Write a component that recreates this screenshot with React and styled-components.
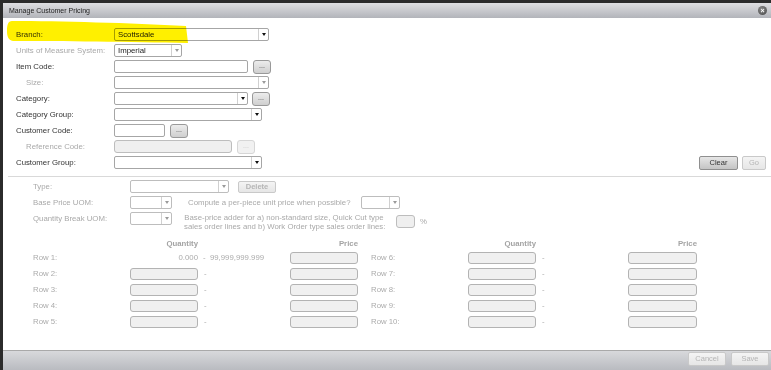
import { Fragment } from "react";
import styled, { createGlobalStyle } from "styled-components";

const GlobalStyle = createGlobalStyle`
  * { box-sizing: border-box; }
  html, body { margin: 0; padding: 0; }
  body {
    background: #2b2b2b;
    font-family: "Liberation Sans", Arial, sans-serif;
    font-size: 7.8px;
    color: #333;
    overflow: hidden;
  }
`;

const Window = styled.div`
  position: relative;
  margin: 3px 0 0 3px;
  width: 768px;
  height: 367px;
  background: #fff;
  display: flex;
  flex-direction: column;
`;

const TitleBar = styled.div`
  height: 15px;
  background: linear-gradient(#dedee1, #b2b4ba);
  display: flex;
  align-items: center;
  justify-content: space-between;
  padding: 0 4px 0 6px;
  font-size: 7px;
  color: #222;
`;

const CloseButton = styled.div`
  width: 9px;
  height: 9px;
  border-radius: 50%;
  background: radial-gradient(circle at 40% 35%, #8a8a8a, #444);
  color: #fff;
  font-size: 7px;
  line-height: 9px;
  text-align: center;
  font-weight: bold;
`;

const Content = styled.div`
  flex: 1;
  padding-top: 10px;
`;

const TopForm = styled.div`
  padding: 0 5px 0 13px;
`;

const Row = styled.div`
  display: flex;
  align-items: flex-start;
  height: 16px;
`;

const Label = styled.div`
  width: ${(p) => p.$w || 98}px;
  padding-left: ${(p) => (p.$indent ? 10 : 0)}px;
  line-height: 13px;
  color: ${(p) => (p.$muted ? "#a9a9a9" : "#333")};
  white-space: nowrap;
  flex-shrink: 0;
`;

const Input = styled.div`
  width: ${(p) => p.$w}px;
  height: ${(p) => p.$h || 13}px;
  margin-left: ${(p) => p.$ml || 0}px;
  margin-top: ${(p) => p.$mt || 0}px;
  border: 1px solid ${(p) => (p.$off ? "#bdbdbd" : "#a6a6a6")};
  border-radius: ${(p) => (p.$off ? 3 : 2)}px;
  background: ${(p) => (p.$off ? "#efefef" : "#fff")};
  flex-shrink: 0;
`;

const Select = styled.div`
  width: ${(p) => p.$w}px;
  height: 13px;
  margin-left: ${(p) => p.$ml || 0}px;
  border: 1px solid ${(p) => (p.$off ? "#bdbdbd" : "#a6a6a6")};
  border-radius: 2px;
  background: #fff;
  display: flex;
  flex-shrink: 0;
`;

const SelectValue = styled.div`
  flex: 1;
  padding-left: 3px;
  line-height: 11px;
  color: #222;
  overflow: hidden;
  white-space: nowrap;
`;

const SelectArrow = styled.div`
  width: 10px;
  border-left: 1px solid #d0d0d0;
  display: flex;
  align-items: center;
  justify-content: center;

  &::after {
    content: "";
    border-left: 2.5px solid transparent;
    border-right: 2.5px solid transparent;
    border-top: 3px solid ${(p) => (p.$light ? "#9a9a9a" : "#111")};
  }
`;

const DotButton = styled.div`
  width: 18px;
  height: 14px;
  margin-left: ${(p) => p.$ml || 5}px;
  border: 1px solid ${(p) => (p.$off ? "#d6d6d6" : "#999")};
  border-radius: 3px;
  background: ${(p) =>
    p.$off ? "#f1f1f1" : "linear-gradient(#ececec, #cfcfcf)"};
  color: ${(p) => (p.$off ? "#c8c8c8" : "#444")};
  font-size: 7px;
  line-height: 10px;
  text-align: center;
  flex-shrink: 0;
`;

const ActionButton = styled.div`
  width: ${(p) => p.$w}px;
  height: ${(p) => p.$h || 14}px;
  margin-left: ${(p) => p.$ml || 0}px;
  margin-top: ${(p) => p.$mt || 0}px;
  border: 1px solid ${(p) => (p.$off ? "#c9c9c9" : "#8f8f8f")};
  border-radius: 2px;
  background: ${(p) =>
    p.$off ? "linear-gradient(#f4f4f4, #e6e6e6)" : "linear-gradient(#e6e6e6, #c4c4c4)"};
  color: ${(p) => (p.$off ? "#b5b5b5" : "#333")};
  font-size: 7.5px;
  font-weight: ${(p) => (p.$bold ? "bold" : "normal")};
  line-height: ${(p) => (p.$h || 14) - 2}px;
  text-align: center;
  flex-shrink: 0;
`;

const RightButtons = styled.div`
  margin-left: auto;
  display: flex;
  gap: 4px;
`;

const Divider = styled.div`
  height: 1px;
  margin: 4px 0 3px 5px;
  background: #d9d9d9;
`;

const LowerForm = styled.div`
  padding-left: 30px;
  color: #a9a9a9;
`;

const Note = styled.div`
  width: ${(p) => p.$w}px;
  margin-left: ${(p) => p.$ml}px;
  margin-top: ${(p) => p.$mt || 0}px;
  line-height: ${(p) => p.$lh || 13}px;
  text-align: ${(p) => p.$align || "left"};
  white-space: nowrap;
  flex-shrink: 0;
`;

const Percent = styled.div`
  margin-left: 5px;
  line-height: 20px;
`;

const BreakRow = styled(Row)`
  height: 24px;
`;

const Grid = styled.div`
  display: grid;
  grid-template-columns: 97px 68px 92px 68px 13px 97px 68px 92px 69px;
  grid-auto-rows: 16px;
  color: #ababab;
`;

const Head = styled.div`
  grid-column: ${(p) => p.$col};
  text-align: right;
  line-height: 16px;
  font-weight: bold;
  color: #a4a4a4;
`;

const RowLabel = styled.div`
  grid-column: ${(p) => p.$col};
  line-height: 12px;
`;

const Cell = styled.div`
  grid-column: ${(p) => p.$col};
  line-height: 12px;
  text-align: ${(p) => p.$align || "left"};
  padding-left: ${(p) => p.$pl || 0}px;
  white-space: nowrap;
`;

const GridInput = styled.div`
  grid-column: ${(p) => p.$col};
  height: 12px;
  border: 1px solid #b3b3b3;
  border-radius: 3px;
  background: #f0f0f0;
`;

const Footer = styled.div`
  height: 20px;
  border-top: 1px solid #a9a9a9;
  background: linear-gradient(#d8d9dc, #b9bbc0);
  display: flex;
  justify-content: flex-end;
  align-items: flex-start;
  padding: 1px 2px 0 0;
  gap: 5px;
`;

const Highlight = styled.svg`
  position: absolute;
  left: -3px;
  top: -3px;
  width: 200px;
  height: 50px;
  mix-blend-mode: multiply;
  pointer-events: none;
`;

const Drop = ({ w, ml, value, off, light }) => (
  <Select $w={w} $ml={ml} $off={off}>
    <SelectValue>{value}</SelectValue>
    <SelectArrow $light={light || off} />
  </Select>
);

const leftRows = [1, 2, 3, 4, 5];

export default function App() {
  return (
    <>
      <GlobalStyle />
      <Window>
        <TitleBar>
          <span>Manage Customer Pricing</span>
          <CloseButton>×</CloseButton>
        </TitleBar>
        <Content>
          <TopForm>
            <Row>
              <Label>Branch:</Label>
              <Drop w={155} value="Scottsdale" />
            </Row>
            <Row>
              <Label $muted>Units of Measure System:</Label>
              <Drop w={68} value="Imperial" light />
            </Row>
            <Row>
              <Label>Item Code:</Label>
              <Input $w={134} />
              <DotButton>...</DotButton>
            </Row>
            <Row>
              <Label $muted $indent>Size:</Label>
              <Drop w={155} light />
            </Row>
            <Row>
              <Label>Category:</Label>
              <Drop w={134} />
              <DotButton $ml={4}>...</DotButton>
            </Row>
            <Row>
              <Label>Category Group:</Label>
              <Drop w={148} />
            </Row>
            <Row>
              <Label>Customer Code:</Label>
              <Input $w={51} />
              <DotButton>...</DotButton>
            </Row>
            <Row>
              <Label $muted $indent>Reference Code:</Label>
              <Input $w={118} $off />
              <DotButton $off>...</DotButton>
            </Row>
            <Row>
              <Label>Customer Group:</Label>
              <Drop w={148} />
              <RightButtons>
                <ActionButton $w={39}>Clear</ActionButton>
                <ActionButton $w={24} $off>Go</ActionButton>
              </RightButtons>
            </Row>
          </TopForm>
          <Divider />
          <LowerForm>
            <Row>
              <Label $w={97} $muted>Type:</Label>
              <Drop w={99} off />
              <ActionButton $w={38} $h={12} $ml={9} $mt={1} $off $bold>
                Delete
              </ActionButton>
            </Row>
            <Row>
              <Label $w={97} $muted>Base Price UOM:</Label>
              <Drop w={42} off />
              <Note $w={173} $ml={16}>
                Compute a per-piece unit price when possible?
              </Note>
              <Drop w={39} off />
            </Row>
            <BreakRow>
              <Label $w={97} $muted>Quantity Break UOM:</Label>
              <Drop w={42} off />
              <Note $w={200} $ml={12} $mt={2} $lh={8.5} $align="center">
                Base-price adder for a) non-standard size, Quick Cut type
                <br />
                sales order lines and b) Work Order type sales order lines:
              </Note>
              <Input $w={19} $ml={12} $mt={3} $off />
              <Percent>%</Percent>
            </BreakRow>
            <Grid>
              <Head $col={2}>Quantity</Head>
              <Head $col={4}>Price</Head>
              <Head $col={7}>Quantity</Head>
              <Head $col={9}>Price</Head>
              {leftRows.map((n) => (
                <Fragment key={n}>
                  <RowLabel $col={1}>Row {n}:</RowLabel>
                  {n === 1 ? (
                    <>
                      <Cell $col={2} $align="right">0.000</Cell>
                      <Cell $col={3} $pl={5}>-&nbsp; 99,999,999.999</Cell>
                    </>
                  ) : (
                    <>
                      <GridInput $col={2} />
                      <Cell $col={3} $pl={6}>-</Cell>
                    </>
                  )}
                  <GridInput $col={4} />
                  <RowLabel $col={6}>Row {n + 5}:</RowLabel>
                  <GridInput $col={7} />
                  <Cell $col={8} $pl={6}>-</Cell>
                  <GridInput $col={9} />
                </Fragment>
              ))}
            </Grid>
          </LowerForm>
        </Content>
        <Footer>
          <ActionButton $w={38} $off>Cancel</ActionButton>
          <ActionButton $w={38} $off>Save</ActionButton>
        </Footer>
        <Highlight viewBox="0 0 200 50">
          <path
            d="M 12 21 C 60 21, 130 23, 186 26 L 188 43 C 130 42, 60 41, 13 41 C 8 40, 7 36, 7 31 C 7 25, 8 21, 12 21 Z"
            fill="#fff000"
          />
        </Highlight>
      </Window>
    </>
  );
}
